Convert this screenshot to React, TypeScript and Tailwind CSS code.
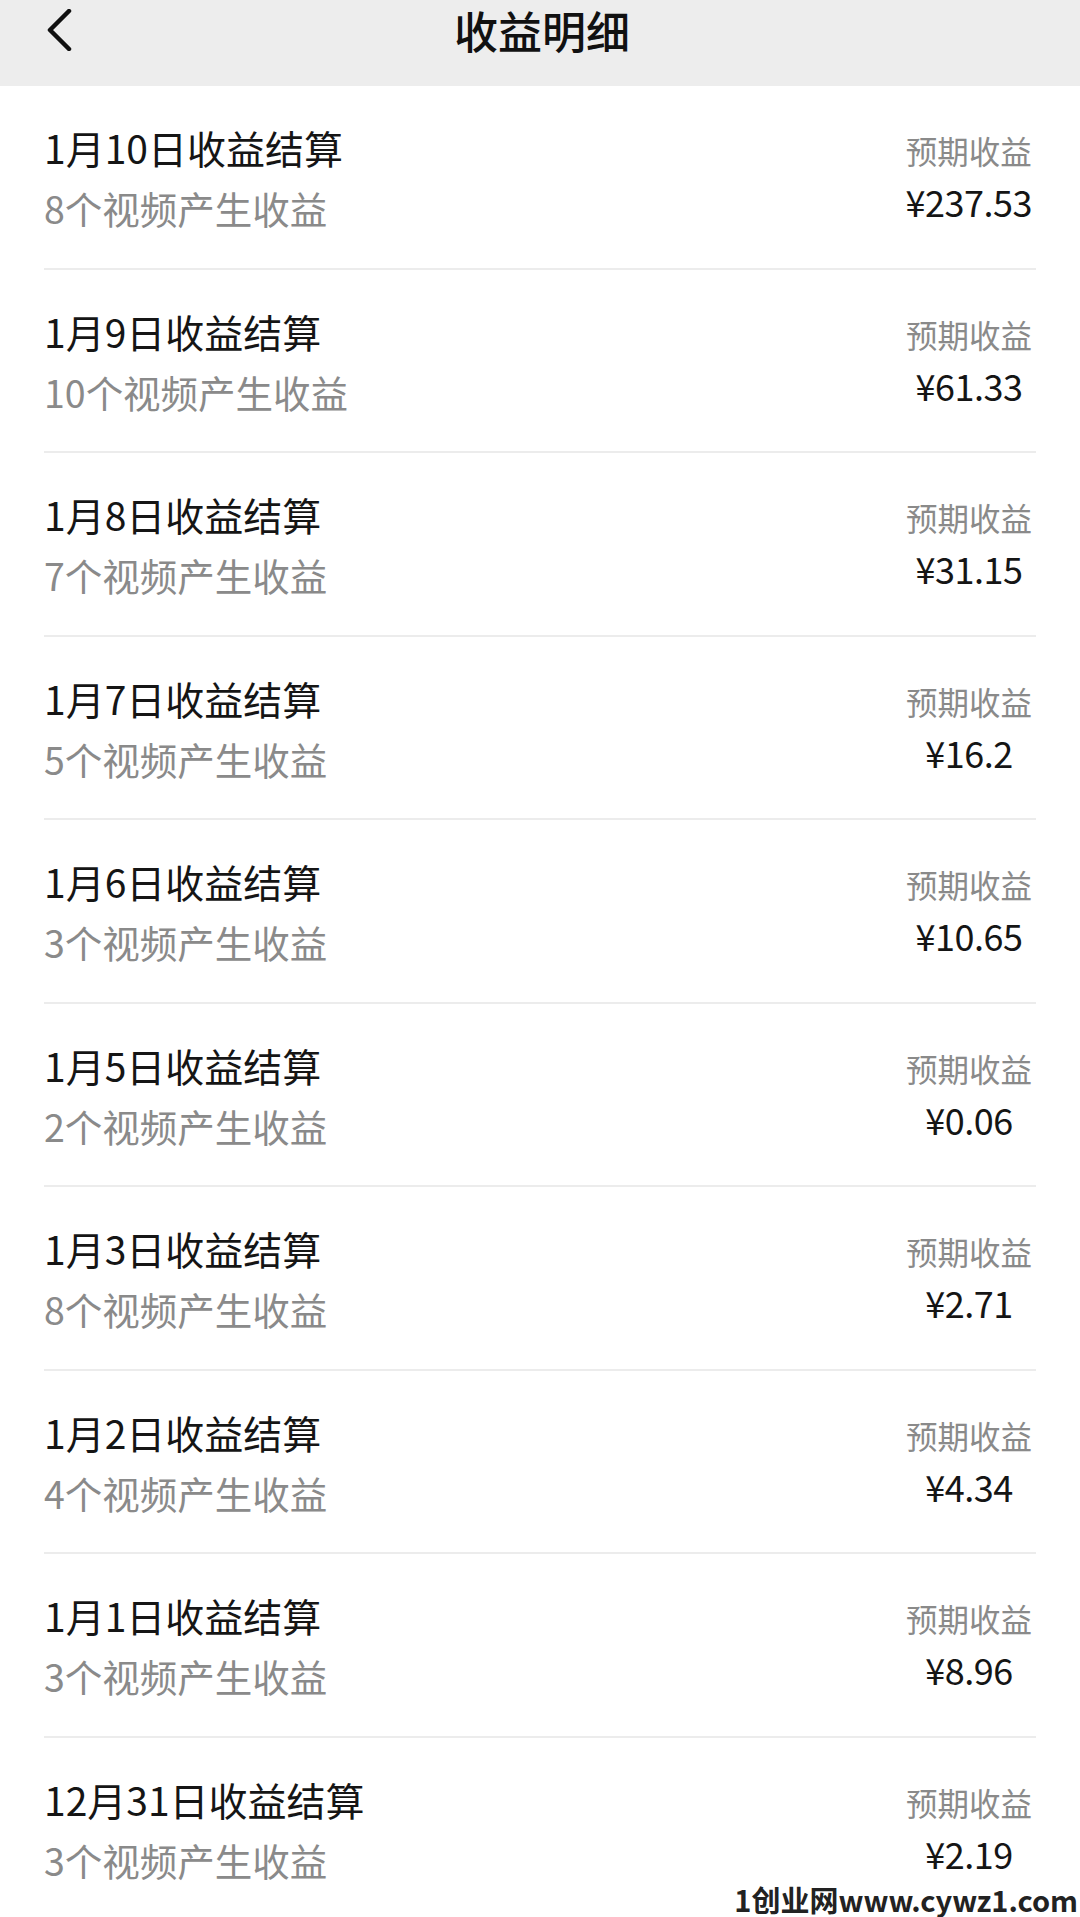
import React from "react";

const rows = [
  { date: "1月10日", count: 8, amount: "237.53" },
  { date: "1月9日", count: 10, amount: "61.33" },
  { date: "1月8日", count: 7, amount: "31.15" },
  { date: "1月7日", count: 5, amount: "16.2" },
  { date: "1月6日", count: 3, amount: "10.65" },
  { date: "1月5日", count: 2, amount: "0.06" },
  { date: "1月3日", count: 8, amount: "2.71" },
  { date: "1月2日", count: 4, amount: "4.34" },
  { date: "1月1日", count: 3, amount: "8.96" },
  { date: "12月31日", count: 3, amount: "2.19" },
];

const App = () => {
  return (
    <main
      className="relative w-[1080px] h-[1917px] overflow-hidden bg-white"
      style={{ fontFamily: '"Noto Sans CJK SC", "Noto Sans", sans-serif' }}
    >
      {/* header */}
      <header className="relative h-[86px] bg-[#ededed] flex justify-center">
        <svg
          className="absolute left-[44px] top-[9px]"
          width="30"
          height="42"
          viewBox="0 0 30 42"
          fill="none"
        >
          <path d="M25 2 L6 21 L25 40" stroke="#111" strokeWidth="4.5" strokeLinecap="round" strokeLinejoin="round" />
        </svg>
        <h1 className="text-[44px] leading-[60px] text-[#111] font-medium pl-[4px]">收益明细</h1>
      </header>

      {/* list */}
      <div className="flex flex-col">
        {rows.map((r) => (
          <div key={r.date} className="px-[44px]">
            <div className="h-[183.5px] flex items-center justify-between border-b-2 border-[#ececec]">
              <div className="flex flex-col gap-[13px] pt-[2px]">
                <p className="text-[39px] leading-[48px] text-[#151515]">{r.date}收益结算</p>
                <p className="text-[37.5px] leading-[48px] text-[#8a8a8a]">{r.count}个视频产生收益</p>
              </div>
              <div className="flex flex-col items-center gap-[9px] pr-[4px]">
                <p className="text-[31.5px] leading-[40px] text-[#8a8a8a]">预期收益</p>
                <p className="text-[36px] leading-[44px] text-[#151515] tracking-[-0.5px]">¥{r.amount}</p>
              </div>
            </div>
          </div>
        ))}
      </div>

      {/* watermark */}
      <p className="absolute right-[2px] bottom-0 text-[29px] leading-[36px] font-bold text-[#222]">
        1创业网www.cywz1.com
      </p>
    </main>
  );
};

export default App;
